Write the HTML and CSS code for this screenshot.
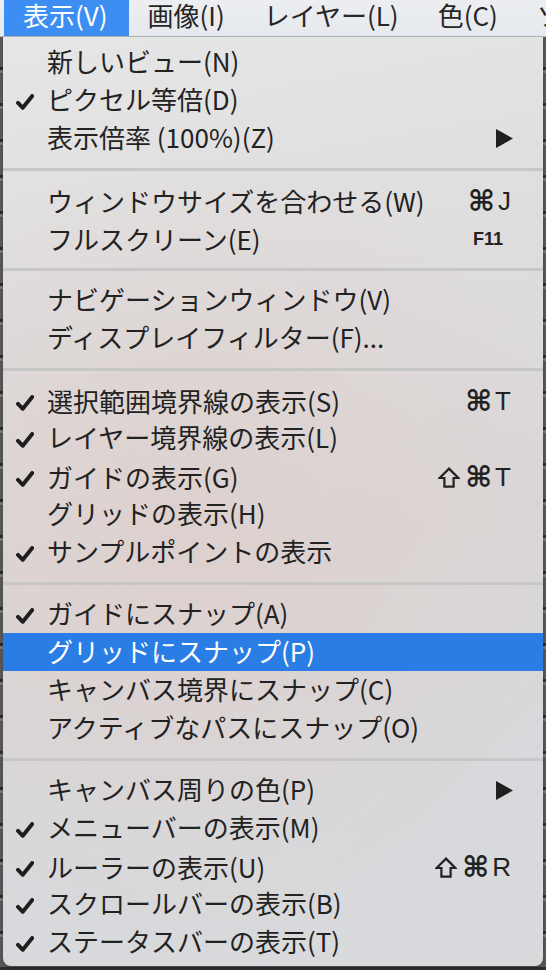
FILE: index.html
```html
<!DOCTYPE html>
<html lang="ja">
<head>
<meta charset="utf-8">
<title>表示メニュー</title>
<link rel="stylesheet" href="styles.css">
</head>
<body>
<div class="screen">
  <header class="menubar">
    <div class="mb-item active">表示(V)</div>
    <div class="mb-item">画像(I)</div>
    <div class="mb-item">レイヤー(L)</div>
    <div class="mb-item">色(C)</div>
    <div class="mb-item">ソ</div>
  </header>
  <div class="stage">
    <div class="menu">
      <div class="row"><span class="chk"></span><span class="label">新しいビュー(N)</span><span class="sc"></span></div>
      <div class="row"><span class="chk"><svg class="tick" viewBox="0 0 18 16"><path d="M2 8.8 L6.8 13.8 L16.2 2"/></svg></span><span class="label">ピクセル等倍(D)</span><span class="sc"></span></div>
      <div class="row"><span class="chk"></span><span class="label">表示倍率 (100%)(Z)</span><span class="sc"><svg class="arrow" viewBox="0 0 17 19"><path d="M0 0 L17 9.5 L0 19 Z"/></svg></span></div>
      <div class="sep"></div>
      <div class="row"><span class="chk"></span><span class="label">ウィンドウサイズを合わせる(W)</span><span class="sc"><span class="cmd">⌘</span>J</span></div>
      <div class="row"><span class="chk"></span><span class="label">フルスクリーン(E)</span><span class="sc fkey">F11</span></div>
      <div class="sep"></div>
      <div class="row"><span class="chk"></span><span class="label">ナビゲーションウィンドウ(V)</span><span class="sc"></span></div>
      <div class="row"><span class="chk"></span><span class="label">ディスプレイフィルター(F)...</span><span class="sc"></span></div>
      <div class="sep"></div>
      <div class="row"><span class="chk"><svg class="tick" viewBox="0 0 18 16"><path d="M2 8.8 L6.8 13.8 L16.2 2"/></svg></span><span class="label">選択範囲境界線の表示(S)</span><span class="sc"><span class="cmd">⌘</span>T</span></div>
      <div class="row"><span class="chk"><svg class="tick" viewBox="0 0 18 16"><path d="M2 8.8 L6.8 13.8 L16.2 2"/></svg></span><span class="label">レイヤー境界線の表示(L)</span><span class="sc"></span></div>
      <div class="row"><span class="chk"><svg class="tick" viewBox="0 0 18 16"><path d="M2 8.8 L6.8 13.8 L16.2 2"/></svg></span><span class="label">ガイドの表示(G)</span><span class="sc"><svg class="shift" viewBox="0 0 22 21"><path d="M11 1.6 L20.4 11 H15.6 V19.6 H6.4 V11 H1.6 Z"/></svg><span class="cmd">⌘</span>T</span></div>
      <div class="row"><span class="chk"></span><span class="label">グリッドの表示(H)</span><span class="sc"></span></div>
      <div class="row"><span class="chk"><svg class="tick" viewBox="0 0 18 16"><path d="M2 8.8 L6.8 13.8 L16.2 2"/></svg></span><span class="label">サンプルポイントの表示</span><span class="sc"></span></div>
      <div class="sep"></div>
      <div class="row"><span class="chk"><svg class="tick" viewBox="0 0 18 16"><path d="M2 8.8 L6.8 13.8 L16.2 2"/></svg></span><span class="label">ガイドにスナップ(A)</span><span class="sc"></span></div>
      <div class="row selected"><span class="chk"></span><span class="label">グリッドにスナップ(P)</span><span class="sc"></span></div>
      <div class="row"><span class="chk"></span><span class="label">キャンバス境界にスナップ(C)</span><span class="sc"></span></div>
      <div class="row"><span class="chk"></span><span class="label">アクティブなパスにスナップ(O)</span><span class="sc"></span></div>
      <div class="sep"></div>
      <div class="row"><span class="chk"></span><span class="label">キャンバス周りの色(P)</span><span class="sc"><svg class="arrow" viewBox="0 0 17 19"><path d="M0 0 L17 9.5 L0 19 Z"/></svg></span></div>
      <div class="row"><span class="chk"><svg class="tick" viewBox="0 0 18 16"><path d="M2 8.8 L6.8 13.8 L16.2 2"/></svg></span><span class="label">メニューバーの表示(M)</span><span class="sc"></span></div>
      <div class="row"><span class="chk"><svg class="tick" viewBox="0 0 18 16"><path d="M2 8.8 L6.8 13.8 L16.2 2"/></svg></span><span class="label">ルーラーの表示(U)</span><span class="sc"><svg class="shift" viewBox="0 0 22 21"><path d="M11 1.6 L20.4 11 H15.6 V19.6 H6.4 V11 H1.6 Z"/></svg><span class="cmd">⌘</span>R</span></div>
      <div class="row"><span class="chk"><svg class="tick" viewBox="0 0 18 16"><path d="M2 8.8 L6.8 13.8 L16.2 2"/></svg></span><span class="label">スクロールバーの表示(B)</span><span class="sc"></span></div>
      <div class="row"><span class="chk"><svg class="tick" viewBox="0 0 18 16"><path d="M2 8.8 L6.8 13.8 L16.2 2"/></svg></span><span class="label">ステータスバーの表示(T)</span><span class="sc"></span></div>
    </div>
  </div>
</div>
</body>
</html>
```
FILE: styles.css
```css
* { box-sizing: border-box; }

html, body {
  margin: 0;
  padding: 0;
  width: 546px;
  height: 970px;
  overflow: hidden;
}

body {
  font-family: "Noto Sans CJK JP", "Noto Sans", sans-serif;
  color: #222;
  background: #4b4b4b;
}

.screen {
  width: 546px;
  height: 970px;
  display: flex;
  flex-direction: column;
}

.menubar {
  height: 37px;
  flex: none;
  display: flex;
  padding-left: 4px;
  background: linear-gradient(#eceef1, #e6e9ed);
  border-bottom: 1px solid #b4b6b9;
  white-space: nowrap;
  overflow-x: clip;
}

.mb-item {
  height: 36px;
  padding: 0 20px 0 19px;
  font-size: 26px;
  line-height: 36px;
  display: flex;
  align-items: center;
  padding-bottom: 6px;
  color: #262626;
  flex: none;
}

.mb-item.active {
  background: #3d8ef3;
  color: #fff;
  padding-right: 21px;
}

.stage {
  flex: 1;
  display: flex;
  padding: 0 3px 4px 3px;
  background:
    repeating-linear-gradient(180deg, #5a5a5a 0 30px, #2e2e2e 30px 33px, #7a7a7a 33px 36px);
}

.menu {
  width: 540px;
  padding: 6px 0 5px;
  border-radius: 0 0 8px 8px;
  background:
    radial-gradient(ellipse 70% 45% at 35% 55%, rgba(222, 207, 204, 0.75), rgba(222, 207, 204, 0) 100%),
    linear-gradient(170deg, #e6e6e7 0%, #dedcdc 30%, #dad6d6 55%, #d7d9dc 80%, #d8dadc 100%);
  box-shadow: 0 2px 4px rgba(0, 0, 0, 0.25);
}

.row {
  height: 38px;
  display: grid;
  grid-template-columns: 44px 1fr auto;
  align-items: center;
  padding-right: 32px;
  padding-bottom: 3px;
  font-size: 26px;
  line-height: 35px;
  white-space: nowrap;
}

.row.selected {
  background: #2a7de5;
  color: #fff;
}

.chk {
  display: flex;
  align-items: center;
  padding-left: 13px;
  padding-top: 6px;
}

.tick {
  width: 18px;
  height: 16px;
  fill: none;
  stroke: #1e1e1e;
  stroke-width: 3.9;
  stroke-linecap: round;
  stroke-linejoin: round;
}

.sc {
  font-family: "Liberation Sans", "DejaVu Sans", sans-serif;
  font-size: 26px;
  display: flex;
  align-items: center;
  justify-content: flex-end;
  color: #222;
  padding-top: 3px;
}

.cmd {
  font-family: "DejaVu Sans", sans-serif;
  font-size: 29px;
  margin-right: 3px;
  font-weight: bold;
}

.shift {
  width: 22px;
  height: 21px;
  fill: none;
  stroke: #222;
  stroke-width: 2.2;
  stroke-linejoin: miter;
  margin-right: 5px;
}

.sc.fkey {
  font-size: 18px;
  font-weight: bold;
  margin-right: 8px;
}

.arrow {
  width: 17px;
  height: 19px;
  fill: #1f1f1f;
  margin-right: -2px;
}

.sep {
  height: 24px;
  display: flex;
  align-items: center;
}

.sep::before {
  content: "";
  display: block;
  width: 100%;
  height: 3px;
  background: #c7c7c8;
}
```
